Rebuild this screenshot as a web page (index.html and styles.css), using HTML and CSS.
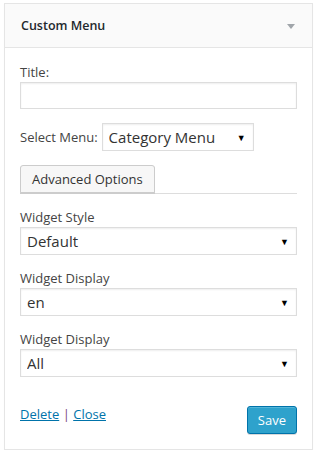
FILE: index.html
```html
<!DOCTYPE html>
<html lang="en">
<head>
  <meta charset="UTF-8">
  <title>Custom Menu Widget</title>
  <link rel="stylesheet" href="styles.css">
</head>
<body>
  <div class="widget">
    <div class="widget-top">
      <h3>Custom Menu</h3>
      <span class="toggle"></span>
    </div>

    <div class="widget-inside">
      <div class="field">
        <label for="title">Title:</label>
        <input type="text" id="title" class="text-input">
      </div>

      <div class="field inline">
        <label for="menu">Select Menu:</label>
        <div class="select-wrap small">
          <select id="menu"><option>Category Menu</option></select>
          <span class="arrow">&#9660;</span>
        </div>
      </div>

      <div class="tabs">
        <button type="button" class="tab">Advanced Options</button>
      </div>

      <div class="field">
        <label for="style">Widget Style</label>
        <div class="select-wrap">
          <select id="style"><option>Default</option></select>
          <span class="arrow">&#9660;</span>
        </div>
      </div>

      <div class="field">
        <label for="lang">Widget Display</label>
        <div class="select-wrap">
          <select id="lang"><option>en</option></select>
          <span class="arrow">&#9660;</span>
        </div>
      </div>

      <div class="field">
        <label for="display">Widget Display</label>
        <div class="select-wrap">
          <select id="display"><option>All</option></select>
          <span class="arrow">&#9660;</span>
        </div>
      </div>

      <div class="widget-actions">
        <div class="links">
          <a href="#">Delete</a> <span class="sep">|</span> <a href="#">Close</a>
        </div>
        <button type="button" class="button-primary">Save</button>
      </div>
    </div>
  </div>
</body>
</html>
```

FILE: styles.css
```css
body {
  margin: 0;
  padding: 3px 2px 0 4px;
  background: #fff;
  font-family: 'Open Sans', sans-serif;
  font-size: 13px;
  color: #444;
}

.widget {
  width: 307px;
  border: 1px solid #e5e5e5;
  box-shadow: 0 1px 1px rgba(0, 0, 0, 0.04);
  background: #fff;
}

.widget-top {
  display: flex;
  align-items: center;
  justify-content: space-between;
  height: 43px;
  padding: 0 17px 0 16px;
  background: #fafafa;
  border-bottom: 1px solid #e5e5e5;
}

.widget-top h3 {
  margin: 0;
  font-size: 12.5px;
  font-weight: 600;
  color: #23282d;
}

.toggle {
  width: 0;
  height: 0;
  border-left: 4px solid transparent;
  border-right: 4px solid transparent;
  border-top: 5px solid #a0a5aa;
  margin-top: 2px;
}

.widget-inside {
  padding: 15px 15px 15px;
}

.field {
  margin-bottom: 14px;
}

.field label {
  display: block;
  line-height: 18px;
  margin-bottom: 1px;
}

.field.inline {
  display: flex;
  align-items: center;
  gap: 4px;
}

.field.inline label {
  margin-bottom: 0;
}

.text-input {
  display: block;
  width: 100%;
  height: 27px;
  box-sizing: border-box;
  border: 1px solid #ddd;
  box-shadow: inset 0 1px 2px rgba(0, 0, 0, 0.07);
  font: inherit;
}

.select-wrap {
  position: relative;
}

.select-wrap.small {
  width: 152px;
}

.select-wrap select {
  display: block;
  width: 100%;
  height: 28px;
  box-sizing: border-box;
  -webkit-appearance: none;
  appearance: none;
  border: 1px solid #ddd;
  border-radius: 0;
  box-shadow: inset 0 1px 2px rgba(0, 0, 0, 0.07);
  background: #fff;
  padding: 0 6px;
  font-family: 'Open Sans', sans-serif;
  font-size: 15px;
  color: #333;
}

.arrow {
  position: absolute;
  right: 8px;
  top: 8px;
  font-size: 9px;
  color: #000;
  pointer-events: none;
}

.tabs {
  display: flex;
  border-bottom: 1px solid #ddd;
  margin-bottom: 14px;
}

.tab {
  height: 28px;
  padding: 0 11px;
  border: 1px solid #ccc;
  border-radius: 3px 3px 0 0;
  background: #f7f7f7;
  box-shadow: 0 1px 0 #ccc;
  font-family: 'Open Sans', sans-serif;
  font-size: 13px;
  color: #333;
}

.widget-actions {
  display: flex;
  justify-content: space-between;
  align-items: flex-start;
  margin-top: 28px;
}

.links {
  line-height: 18px;
}

.links a {
  color: #0073aa;
}

.sep {
  color: #7b3f78;
}

.button-primary {
  height: 28px;
  padding: 0 10px;
  margin-top: 1px;
  border: 1px solid #0073aa;
  border-radius: 3px;
  background: #2ea2cc;
  box-shadow: inset 0 1px 0 rgba(120, 200, 230, 0.5), 0 1px 0 rgba(0, 0, 0, 0.15);
  color: #fff;
  font-family: 'Open Sans', sans-serif;
  font-size: 13px;
}
```
